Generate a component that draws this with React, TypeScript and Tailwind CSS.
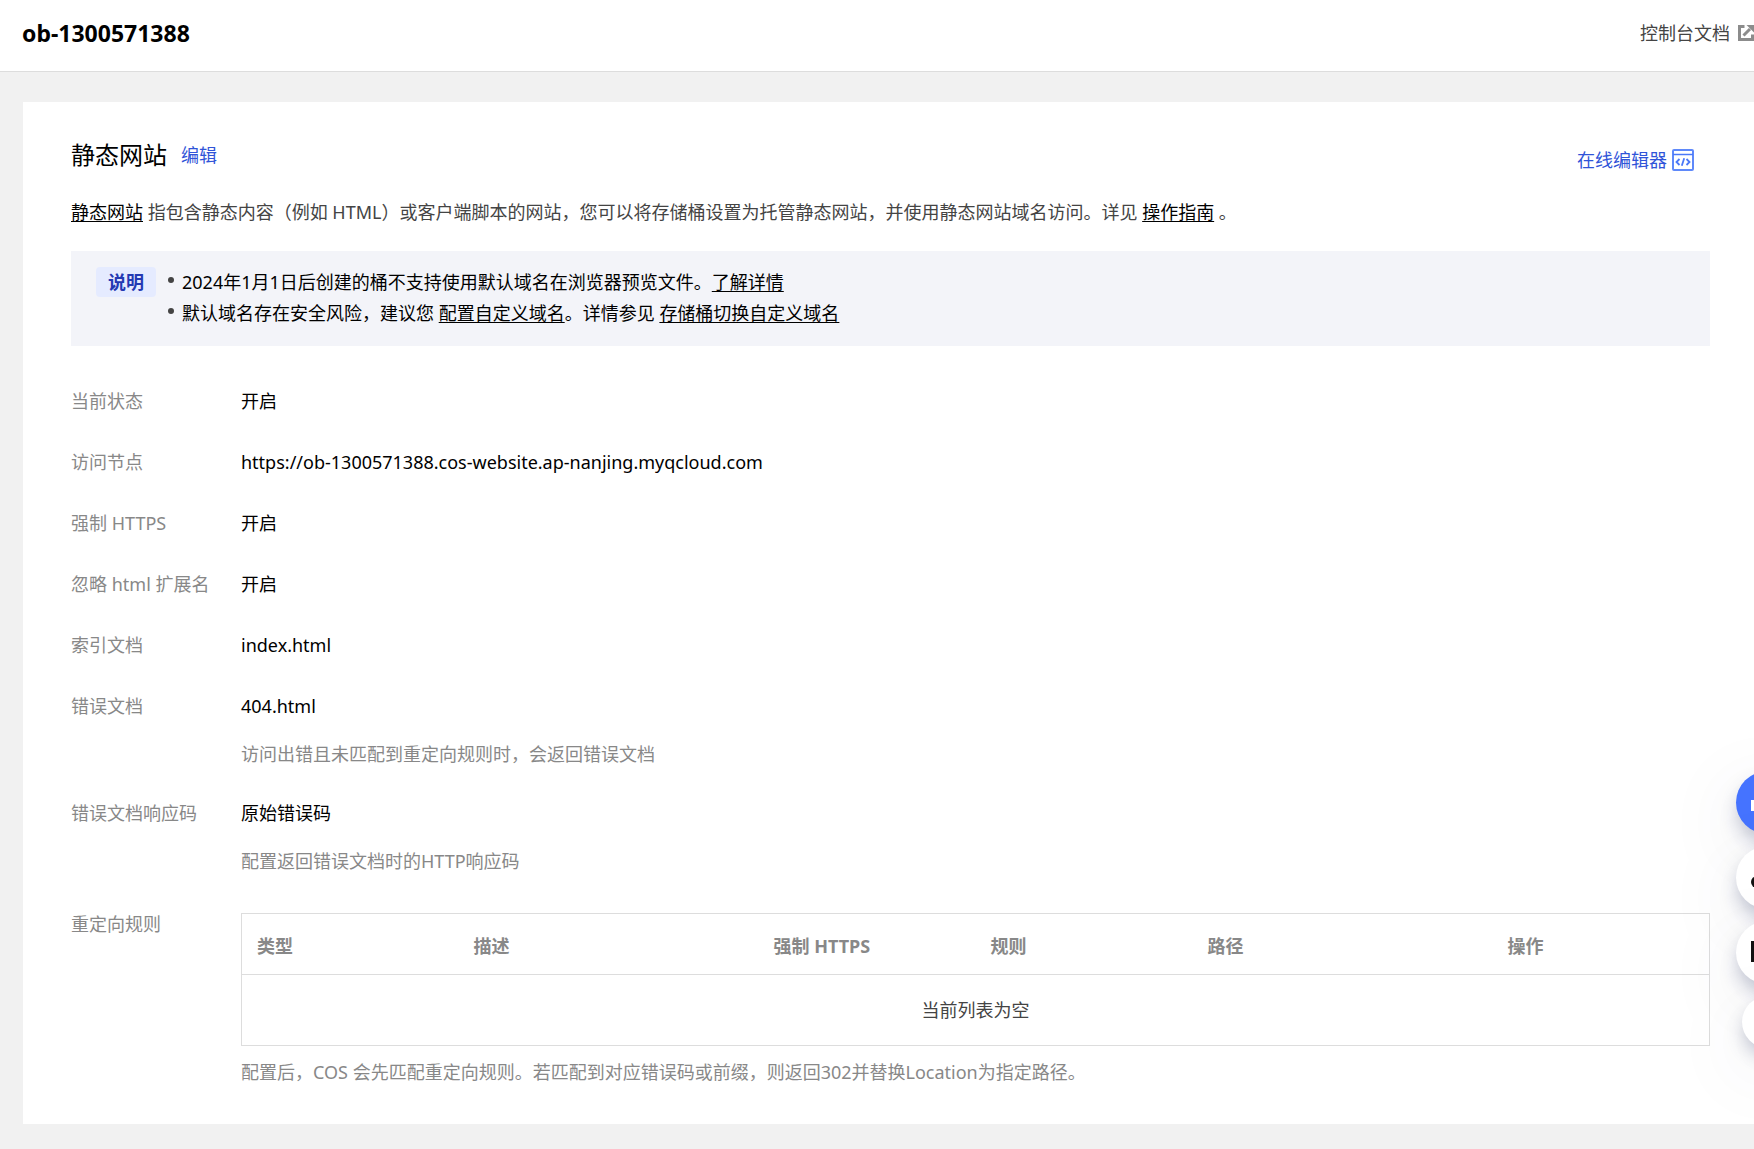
import type { ReactNode } from "react";

const columns = ["类型", "描述", "强制 HTTPS", "规则", "路径", "操作"];

function TextLink({ children }: { children: ReactNode }) {
  return (
    <a href="#" className="text-black underline underline-offset-2">
      {children}
    </a>
  );
}

function ExternalIcon() {
  return (
    <svg className="h-4 w-4 shrink-0" viewBox="0 0 16 16" fill="none" stroke="#8c8c8c" strokeWidth="3">
      <path d="M6.5 1.5H1.5v13h13V9.5" />
      <path d="M5.5 10.5 12 4" />
      <path d="M8.5 0H16v7.5z" fill="#8c8c8c" stroke="none" />
    </svg>
  );
}

function EditorIcon() {
  return (
    <svg className="h-[22px] w-[22px] shrink-0" viewBox="0 0 22 22" fill="none" stroke="#4a78f8" strokeWidth="1.5">
      <rect x="1" y="1" width="20" height="20" rx="1" stroke="#5f89fa" strokeWidth="2" />
      <path d="M1 5.5h20" />
      <path d="M7.5 10 4.5 13l3 3M14.5 10l3 3-3 3M12.2 9.2l-2.4 7.6" strokeWidth="1.8" />
    </svg>
  );
}

function Field({ label, hint, children }: { label: string; hint?: string; children: ReactNode }) {
  return (
    <div className="flex">
      <dt className="w-[170px] shrink-0 text-[#888]">{label}</dt>
      <dd className="min-w-0 flex-1 text-black">
        {children}
        {hint && <p className="mt-[22px] leading-6 text-[#888]">{hint}</p>}
      </dd>
    </div>
  );
}

function RuleTable() {
  return (
    <table className="w-full table-fixed border-collapse border border-[#ddd]">
      <colgroup>
        <col className="w-[217px]" />
        <col className="w-[300px]" />
        <col className="w-[217px]" />
        <col className="w-[217px]" />
        <col className="w-[300px]" />
        <col className="w-[217px]" />
      </colgroup>
      <thead>
        <tr className="h-[61px] border-b border-[#ddd]">
          {columns.map((name) => (
            <th key={name} className="px-[15px] pt-1 text-left font-bold text-[#888]">
              {name}
            </th>
          ))}
        </tr>
      </thead>
      <tbody>
        <tr className="h-[71px]">
          <td colSpan={columns.length} className="text-center text-[#444]">
            当前列表为空
          </td>
        </tr>
      </tbody>
    </table>
  );
}

const floating =
  "flex items-center justify-center rounded-full shadow-[0_10px_20px_-3px_rgba(55,66,110,0.35),0_20px_80px_rgba(55,66,110,0.1)]";

function FloatingTools() {
  return (
    <aside className="fixed top-[771px] right-[-45px] flex flex-col items-center gap-3">
      <button aria-label="助手" className={`${floating} h-[63px] w-[63px] bg-[#4573ff]`}>
        <svg width="34" height="34" viewBox="0 0 34 34" fill="#fff">
          <rect y="14" width="34" height="11" />
        </svg>
      </button>
      <button aria-label="客服" className={`${floating} h-[63px] w-[63px] bg-white`}>
        <svg width="34" height="34" viewBox="0 0 34 34" fill="#111">
          <circle cx="6" cy="21" r="6" />
          <circle cx="28" cy="21" r="6" />
        </svg>
      </button>
      <button aria-label="文档" className={`${floating} h-[63px] w-[63px] bg-white`}>
        <svg width="34" height="34" viewBox="0 0 34 34" fill="#111">
          <rect y="5" width="34" height="21" />
        </svg>
      </button>
      <button aria-label="收起" className={`${floating} h-[52px] w-[52px] bg-white`} />
    </aside>
  );
}

export default function App() {
  return (
    <div className="min-h-screen bg-[#f1f1f1] pb-[25px] font-['Noto_Sans','Noto_Sans_CJK_SC',sans-serif] text-[18px] leading-7 text-[#444]">
      <header className="flex h-[72px] items-center justify-between border-b border-[#ddd] bg-white pb-[5px] pl-[22px]">
        <h1 className="text-[23px] font-bold text-black">ob-1300571388</h1>
        <a href="#" className="flex items-center gap-2">
          控制台文档
          <ExternalIcon />
        </a>
      </header>

      <main className="mt-[30px] ml-[23px] bg-white pt-[34px] pr-11 pb-[38px] pl-12">
        <div className="flex items-center justify-between">
          <div className="flex items-center gap-[14px]">
            <h2 className="text-[24px] leading-9 text-black">静态网站</h2>
            <button className="text-[#3054d8]">编辑</button>
          </div>
          <a href="#" className="mt-[10px] mr-4 flex items-center gap-[5px] text-[#3054d8]">
            在线编辑器
            <EditorIcon />
          </a>
        </div>

        <p className="mt-6">
          <TextLink>静态网站</TextLink> 指包含静态内容（例如 HTML）或客户端脚本的网站，您可以将存储桶设置为托管静态网站，并使用静态网站域名访问。详见{" "}
          <TextLink>操作指南</TextLink> 。
        </p>

        <section className="mt-[25px] flex h-[95px] items-start bg-[#f3f4f9] px-[25px] pt-4 text-black">
          <strong className="mr-3 rounded-sm bg-[#e5ebff] px-3 leading-[30px] text-[#2339b3]">说明</strong>
          <ul className="leading-[31px]">
            <li className="flex">
              <span className="mt-[10px] mr-2 h-[6px] w-[6px] rounded-full bg-[#444]" />
              <p>
                2024年1月1日后创建的桶不支持使用默认域名在浏览器预览文件。<TextLink>了解详情</TextLink>
              </p>
            </li>
            <li className="flex">
              <span className="mt-[10px] mr-2 h-[6px] w-[6px] rounded-full bg-[#444]" />
              <p>
                默认域名存在安全风险，建议您 <TextLink>配置自定义域名</TextLink>。详情参见{" "}
                <TextLink>存储桶切换自定义域名</TextLink>
              </p>
            </li>
          </ul>
        </section>

        <dl className="mt-[41px] flex flex-col gap-[33px]">
          <Field label="当前状态">开启</Field>
          <Field label="访问节点">https://ob-1300571388.cos-website.ap-nanjing.myqcloud.com</Field>
          <Field label="强制 HTTPS">开启</Field>
          <Field label="忽略 html 扩展名">开启</Field>
          <Field label="索引文档">index.html</Field>
          <Field label="错误文档" hint="访问出错且未匹配到重定向规则时，会返回错误文档">
            404.html
          </Field>
          <Field label="错误文档响应码" hint="配置返回错误文档时的HTTP响应码">
            原始错误码
          </Field>
          <div className="flex">
            <dt className="w-[170px] shrink-0 pt-1 text-[#888]">重定向规则</dt>
            <dd className="min-w-0 flex-1 pt-[7px]">
              <RuleTable />
              <p className="mt-3 text-[#888]">
                配置后，COS 会先匹配重定向规则。若匹配到对应错误码或前缀，则返回302并替换Location为指定路径。
              </p>
            </dd>
          </div>
        </dl>
      </main>

      <FloatingTools />
    </div>
  );
}
